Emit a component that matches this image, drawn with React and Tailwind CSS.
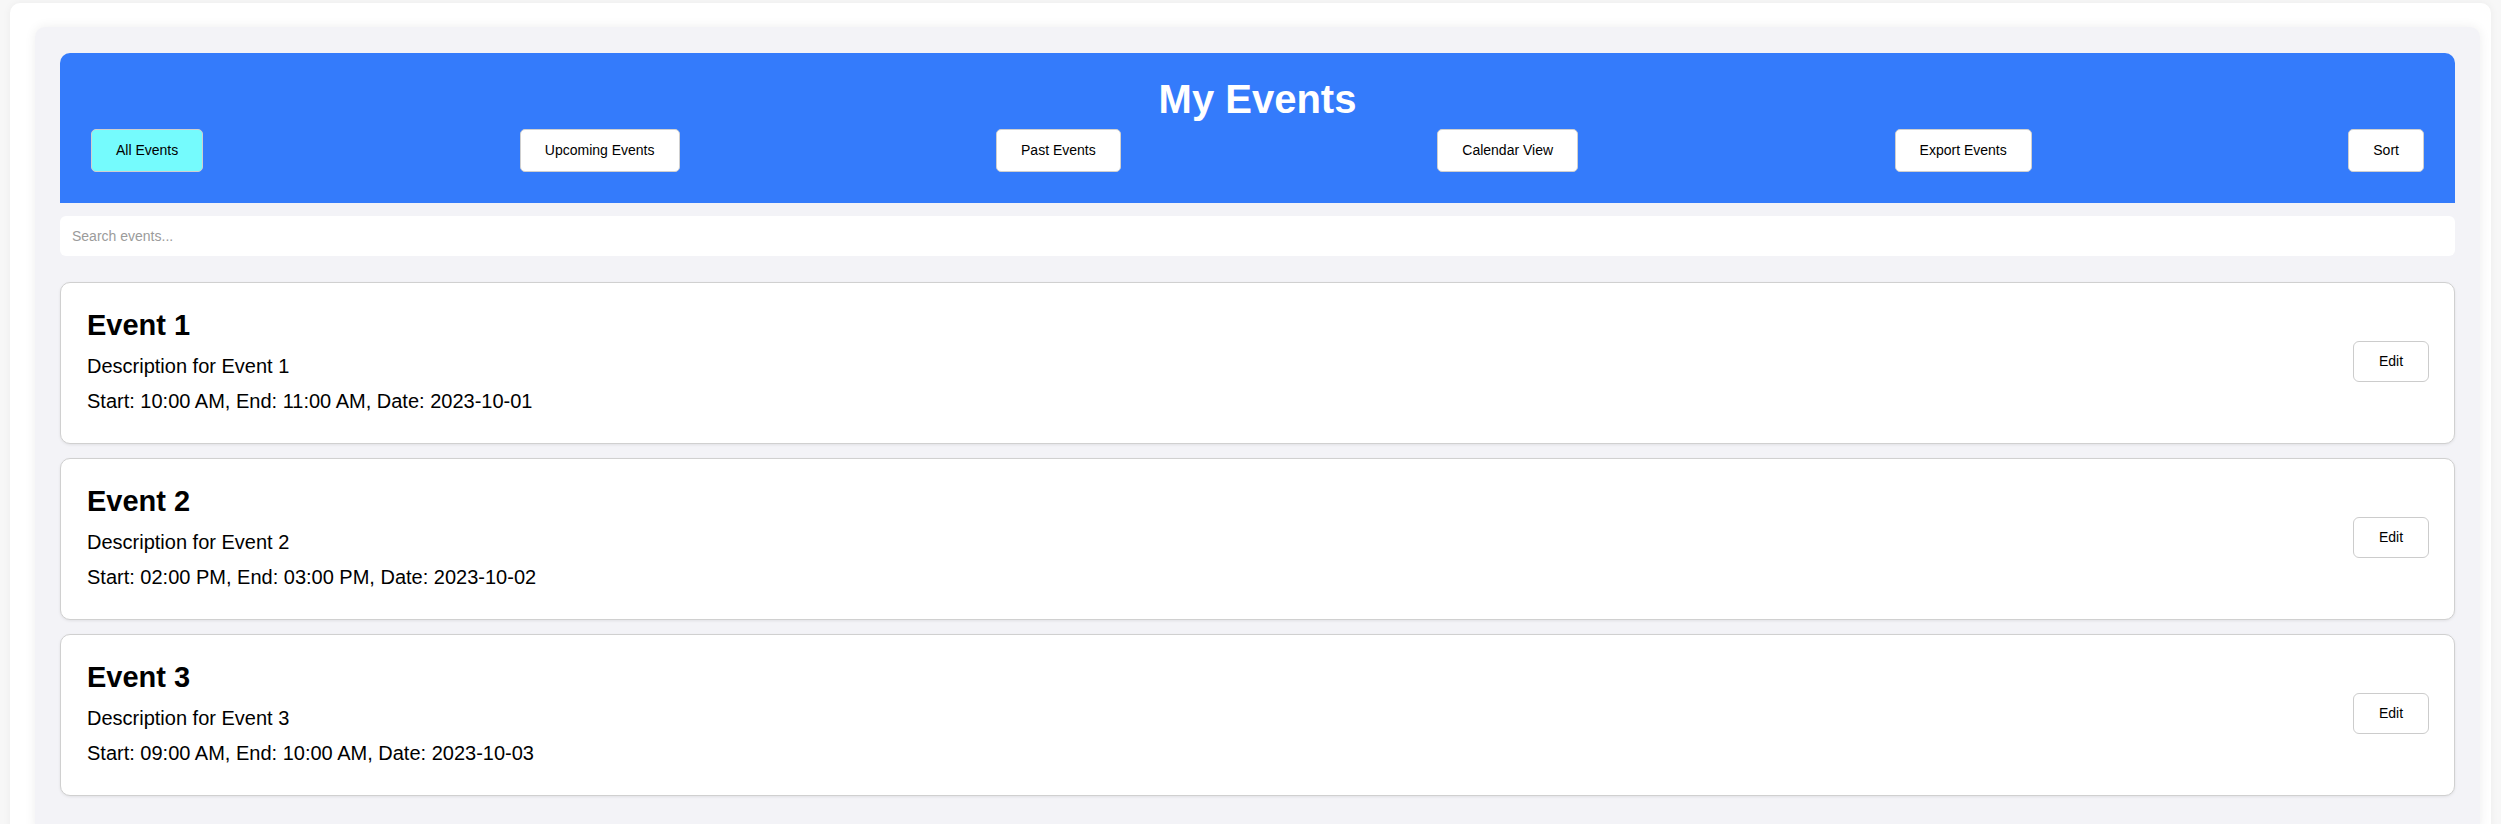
import React from "react";

const tabs = [
  { label: "All Events", active: true },
  { label: "Upcoming Events" },
  { label: "Past Events" },
  { label: "Calendar View" },
  { label: "Export Events" },
  { label: "Sort" },
];

const events = [
  {
    title: "Event 1",
    desc: "Description for Event 1",
    time: "Start: 10:00 AM, End: 11:00 AM, Date: 2023-10-01",
  },
  {
    title: "Event 2",
    desc: "Description for Event 2",
    time: "Start: 02:00 PM, End: 03:00 PM, Date: 2023-10-02",
  },
  {
    title: "Event 3",
    desc: "Description for Event 3",
    time: "Start: 09:00 AM, End: 10:00 AM, Date: 2023-10-03",
  },
];

export default function App() {
  return (
    <div className="min-h-screen bg-[#f7f7f7] pt-[3px] px-[10px] font-['Liberation_Sans',Arial,sans-serif] text-black">
      <div className="bg-white rounded-[10px] shadow-[0_0_8px_rgba(0,0,0,0.05)] pt-[24px] pl-[25px] pr-[11px] min-h-[821px]">
        <div className="bg-[#f3f3f7] rounded-[10px] shadow-[0_0_12px_rgba(0,0,0,0.07)] px-[25px] pt-[26px] pb-[40px]">
          {/* Header */}
          <div className="bg-[#347bfb] rounded-t-[10px] px-[31px] pt-[23px] pb-[31px]">
            <h1 className="text-center text-white font-bold text-[40px] leading-[46px]">
              My Events
            </h1>
            <div className="mt-[7px] flex items-center justify-between">
              {tabs.map((t) => (
                <button
                  key={t.label}
                  className={
                    t.active
                      ? "h-[43px] px-6 text-[14px] leading-[17px] rounded-[5px] border border-[#cfcfcf] bg-[#75fbfd] text-black"
                      : "h-[43px] px-6 text-[14px] leading-[17px] rounded-[5px] border border-[#cfcfcf] bg-white text-black"
                  }
                >
                  {t.label}
                </button>
              ))}
            </div>
          </div>

          {/* Search */}
          <div className="mt-[13px]">
            <input
              type="text"
              placeholder="Search events..."
              className="w-full h-[40px] rounded-[6px] bg-white px-3 text-[14px] outline-none placeholder:text-[#9b9b9b]"
            />
          </div>

          {/* Event list */}
          <div className="mt-[26px] flex flex-col gap-[14px]">
            {events.map((e) => (
              <div
                key={e.title}
                className="flex items-center justify-between bg-white border border-[#d0d0d0] rounded-[10px] shadow-[0_1px_3px_rgba(0,0,0,0.08)] pl-[26px] pr-[25px] pt-[26px] pb-[30px]"
              >
                <div className="flex flex-col">
                  <h2 className="font-bold text-[29px] leading-[33px]">{e.title}</h2>
                  <p className="mt-[13px] text-[20px] leading-[23px]">{e.desc}</p>
                  <p className="mt-[12px] text-[20px] leading-[23px]">{e.time}</p>
                </div>
                <button className="h-[41px] w-[76px] text-[14px] leading-[17px] rounded-[6px] border border-[#cccccc] bg-white text-black">
                  Edit
                </button>
              </div>
            ))}
          </div>
        </div>
      </div>
    </div>
  );
}
